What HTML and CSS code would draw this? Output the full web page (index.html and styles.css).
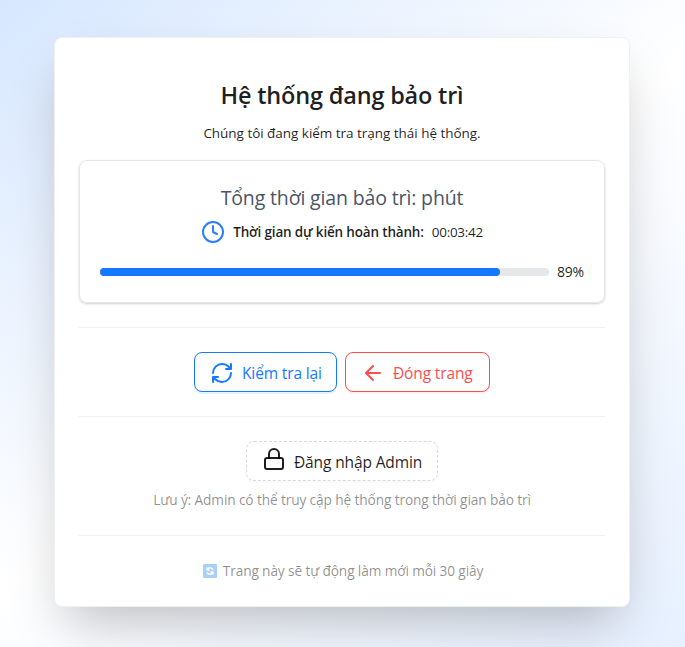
FILE: index.html
```html
<!DOCTYPE html>
<html lang="vi">
<head>
<meta charset="utf-8">
<title>Hệ thống đang bảo trì</title>
<link rel="stylesheet" href="styles.css">
</head>
<body>
<main class="card">
  <h1 class="title"><span>Hệ thống đang bảo trì</span></h1>
  <p class="subtitle"><span>Chúng tôi đang kiểm tra trạng thái hệ thống.</span></p>
  <section class="status">
    <p class="total"><span>Tổng thời gian bảo trì: phút</span></p>
    <div class="eta">
      <svg class="icon clock" viewBox="0 0 24 24"><circle cx="12" cy="12" r="10"/><path d="M12 6v6l4 2"/></svg>
      <strong class="eta-label">Thời gian dự kiến hoàn thành:</strong>
      <span class="eta-time">00:03:42</span>
    </div>
    <div class="progress">
      <div class="track"><div class="fill" style="width:89%"></div></div>
      <span class="percent">89%</span>
    </div>
  </section>
  <hr class="divider">
  <div class="actions">
    <button class="btn retry">
      <svg class="icon" viewBox="0 0 24 24"><path d="M3 12a9 9 0 0 1 9-9 9.75 9.75 0 0 1 6.74 2.74L21 8M21 3v5h-5M21 12a9 9 0 0 1-9 9 9.75 9.75 0 0 1-6.74-2.74L3 16M8 16H3v5"/></svg>
      <span>Kiểm tra lại</span>
    </button>
    <button class="btn close">
      <svg class="icon" viewBox="0 0 24 24"><path d="m12 19-7-7 7-7M19 12H5"/></svg>
      <span>Đóng trang</span>
    </button>
  </div>
  <hr class="divider">
  <div class="admin">
    <button class="btn login">
      <svg class="icon lock" viewBox="0 0 24 24"><rect x="3" y="11" width="18" height="11" rx="2"/><path d="M7 11V7a5 5 0 0 1 10 0v4"/></svg>
      <span>Đăng nhập Admin</span>
    </button>
    <p class="note"><span>Lưu ý: Admin có thể truy cập hệ thống trong thời gian bảo trì</span></p>
  </div>
  <hr class="divider">
  <p class="footer">
    <svg class="refresh" viewBox="0 0 14 14"><rect width="14" height="14" rx="1" fill="#a9cffb"/><path d="M4 6.500V3.500M4 6h2.500M4.200 5.500C5.500 3.300 8.700 3.300 10 5.700M10 7.500v3M10 8H7.500M9.800 8.500C8.500 10.700 5.300 10.700 4 8.300" fill="none" stroke="#fff" stroke-width="1.500"/></svg>
    <span>Trang này sẽ tự động làm mới mỗi 30 giây</span>
  </p>
</main>
</body>
</html>
```
FILE: styles.css
```css
* { box-sizing: border-box; }
body {
  margin: 0;
  height: 647px;
  overflow: hidden;
  padding: 37px 55px 0 54px;
  background: linear-gradient(142deg, #d6e7ff, #fff 50%, #e6f0ff);
  font: 14px/22px "Open Sans", "Noto Sans", sans-serif;
  color: rgba(0, 0, 0, 0.88);
}
h1, p { margin: 0; white-space: nowrap; }
.card {
  height: 570px;
  padding: 41px 24px 0;
  background: #fff;
  border: 1px solid #f0f0f0;
  border-radius: 8px;
  box-shadow: 0 25px 50px -12px rgba(0, 0, 0, 0.25);
  text-align: center;
}
.title { font-size: 23.5px; line-height: 32px; font-weight: 600; letter-spacing: -0.2px; }
.subtitle { margin: 11px 0 16px; font-size: 13.5px; letter-spacing: -0.03px; }
.status {
  height: 143px;
  padding: 23px 20px 0;
  border: 1px solid #e5e7eb;
  border-radius: 8px;
  box-shadow: 0 1px 3px rgba(0, 0, 0, 0.1), 0 1px 2px rgba(0, 0, 0, 0.1);
}
.total { font-size: 19.5px; line-height: 28px; color: #4a5565; letter-spacing: -0.14px; }
.eta {
  display: flex;
  align-items: center;
  justify-content: center;
  gap: 8px;
  margin-top: 8px;
  white-space: nowrap;
}
.eta-label { font-weight: 600; font-size: 13.5px; letter-spacing: -0.17px; }
.eta-time { font-size: 13.5px; letter-spacing: -0.3px; }
.icon {
  width: 24px;
  height: 24px;
  flex: none;
  fill: none;
  stroke: currentColor;
  stroke-width: 2;
  stroke-linecap: round;
  stroke-linejoin: round;
}
.clock { color: #2b7fff; }
.progress { display: flex; align-items: center; gap: 8px; margin-top: 17px; }
.track { width: 449px; height: 8px; border-radius: 4px; background: #e5e7eb; }
.fill { height: 8px; border-radius: 4px; background: #1677ff; }
.percent { letter-spacing: -0.3px; }
.divider { margin: 24px 0; border: 0; border-top: 1px solid #f0f0f0; }
.actions { display: flex; justify-content: center; gap: 8px; }
.btn {
  display: flex;
  align-items: center;
  gap: 8px;
  height: 40px;
  padding: 2px 15px 0;
  border: 1px solid;
  border-radius: 8px;
  background: #fff;
  font: 15.5px/24px "Open Sans", "Noto Sans", sans-serif;
  letter-spacing: -0.13px;
  white-space: nowrap;
}
.retry { width: 143px; color: #1677ff; box-shadow: 0 2px 0 rgba(5, 145, 255, 0.1); }
.close { width: 145px; color: #ff4d4f; box-shadow: 0 2px 0 rgba(255, 38, 5, 0.06); }
.login {
  width: 192px;
  margin: 0 auto;
  color: rgba(0, 0, 0, 0.88);
  border: 1px dashed #d9d9d9;
  box-shadow: 0 2px 0 rgba(0, 0, 0, 0.02);
}
.lock { margin-bottom: 6px; }
.note { margin-top: 8px; font-size: 13.7px; color: rgba(0, 0, 0, 0.45); letter-spacing: -0.12px; }
.footer {
  display: flex;
  justify-content: center;
  align-items: center;
  gap: 6px;
  margin-top: 24px;
  padding-left: 2px;
  font-size: 13.7px;
  color: rgba(0, 0, 0, 0.45);
  letter-spacing: -0.13px;
}
.refresh { width: 14px; height: 14px; }
```
